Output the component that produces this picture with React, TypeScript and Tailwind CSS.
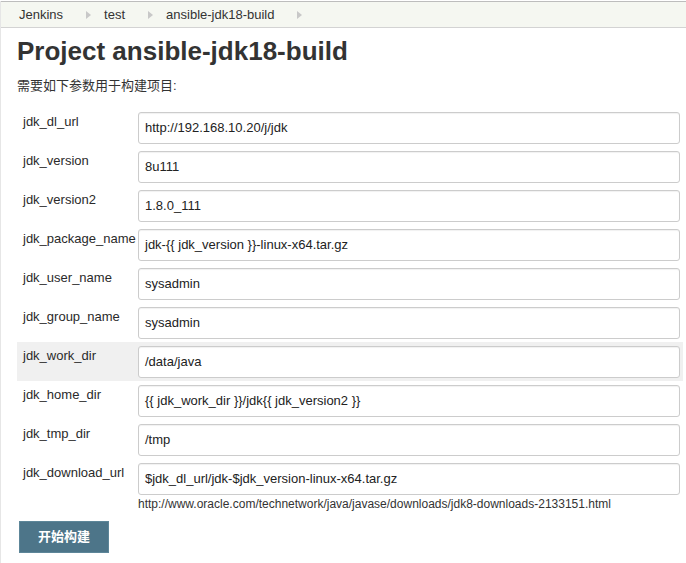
const params: [string, string][] = [
  ["jdk_dl_url", "http://192.168.10.20/j/jdk"],
  ["jdk_version", "8u111"],
  ["jdk_version2", "1.8.0_111"],
  ["jdk_package_name", "jdk-{{ jdk_version }}-linux-x64.tar.gz"],
  ["jdk_user_name", "sysadmin"],
  ["jdk_group_name", "sysadmin"],
  ["jdk_work_dir", "/data/java"],
  ["jdk_home_dir", "{{ jdk_work_dir }}/jdk{{ jdk_version2 }}"],
  ["jdk_tmp_dir", "/tmp"],
  ["jdk_download_url", "$jdk_dl_url/jdk-$jdk_version-linux-x64.tar.gz"],
];

function Arrow() {
  return (
    <svg width="5" height="8" viewBox="0 0 5 8" className="ml-[23px] mr-[13px]">
      <path d="M0 0 L5 4 L0 8 Z" fill="#c8c8c8" />
    </svg>
  );
}

export default function App() {
  return (
    <div
      className="min-h-[563px] w-[686px] border-l border-[#e6e6e6] bg-white text-[#333]"
      style={{ fontFamily: '"Liberation Sans", Arial, "Noto Sans CJK SC", sans-serif' }}
    >
      <div className="mt-px flex h-[27px] items-center border-y border-y-[#bdbdbd] border-b-[#d3d3d3] bg-[#f5f7f1] pl-[18px] text-[13px]">
        <span>Jenkins</span>
        <Arrow />
        <span>test</span>
        <Arrow />
        <span>ansible-jdk18-build</span>
        <Arrow />
      </div>

      <h1 className="ml-4 mt-[8px] text-[26px] font-bold leading-[30px] text-[#333]">
        Project ansible-jdk18-build
      </h1>
      <p className="ml-4 mt-[12px] text-[13px] leading-[16px]">需要如下参数用于构建项目:</p>

      <div className="ml-4 mr-[3px] mt-[14px]">
        {params.map(([name, value]) => (
          <div
            key={name}
            className={
              "flex h-[39px] items-start pt-[4px] " +
              (name === "jdk_work_dir" ? "bg-[#f0f0f0]" : "")
            }
          >
            <div className="w-[121px] pl-[6px] pt-[2px] text-[13px] leading-[16px] text-[#2a2a2a]">{name}</div>
            <div className="mr-[3px] flex h-[32px] flex-1 items-center rounded-[3px] border border-[#cccccc] bg-white pl-[6px] text-[13px] text-[#222] shadow-[inset_0_1px_1px_rgba(0,0,0,0.06)]">
              {value}
            </div>
          </div>
        ))}
        <div className="ml-[121px] mt-[-1px] text-[12px] leading-[14px] text-[#333]">
          http://www.oracle.com/technetwork/java/javase/downloads/jdk8-downloads-2133151.html
        </div>
      </div>

      <button className="ml-[18px] mt-[10px] flex h-[32px] w-[90px] items-center justify-center border border-[#5d8699] bg-[#4d7589] text-[13px] font-bold text-white">
        开始构建
      </button>
    </div>
  );
}
